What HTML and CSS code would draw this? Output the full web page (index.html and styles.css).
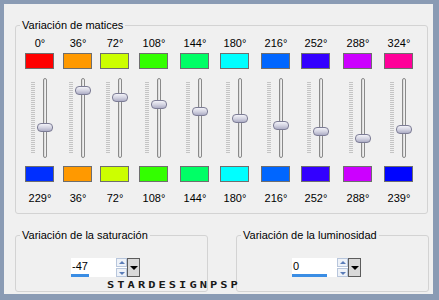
FILE: index.html
```html
<!DOCTYPE html>
<html>
<head>
<meta charset="utf-8">
<title>Variación de matices</title>
<link rel="stylesheet" href="styles.css">
</head>
<body>
<div class="frame">
  <fieldset class="group hue">
    <legend>Variación de matices</legend>
    <div class="cols">
      <div class="col">
        <div class="deg">0°</div>
        <div class="sw" style="background:hsl(0,100%,50%)"></div>
        <div class="slider"><div class="ticks"></div><div class="track"></div><div class="thumb" style="top:45px"></div></div>
        <div class="sw" style="background:hsl(229,100%,50%)"></div>
        <div class="deg">229°</div>
      </div>
      <div class="col">
        <div class="deg">36°</div>
        <div class="sw" style="background:hsl(36,100%,50%)"></div>
        <div class="slider"><div class="ticks"></div><div class="track"></div><div class="thumb" style="top:8px"></div></div>
        <div class="sw" style="background:hsl(36,100%,50%)"></div>
        <div class="deg">36°</div>
      </div>
      <div class="col">
        <div class="deg">72°</div>
        <div class="sw" style="background:hsl(72,100%,50%)"></div>
        <div class="slider"><div class="ticks"></div><div class="track"></div><div class="thumb" style="top:15px"></div></div>
        <div class="sw" style="background:hsl(72,100%,50%)"></div>
        <div class="deg">72°</div>
      </div>
      <div class="col">
        <div class="deg">108°</div>
        <div class="sw" style="background:hsl(108,100%,50%)"></div>
        <div class="slider"><div class="ticks"></div><div class="track"></div><div class="thumb" style="top:22px"></div></div>
        <div class="sw" style="background:hsl(108,100%,50%)"></div>
        <div class="deg">108°</div>
      </div>
      <div class="col">
        <div class="deg">144°</div>
        <div class="sw" style="background:hsl(144,100%,50%)"></div>
        <div class="slider"><div class="ticks"></div><div class="track"></div><div class="thumb" style="top:29px"></div></div>
        <div class="sw" style="background:hsl(144,100%,50%)"></div>
        <div class="deg">144°</div>
      </div>
      <div class="col">
        <div class="deg">180°</div>
        <div class="sw" style="background:hsl(180,100%,50%)"></div>
        <div class="slider"><div class="ticks"></div><div class="track"></div><div class="thumb" style="top:36px"></div></div>
        <div class="sw" style="background:hsl(180,100%,50%)"></div>
        <div class="deg">180°</div>
      </div>
      <div class="col">
        <div class="deg">216°</div>
        <div class="sw" style="background:hsl(216,100%,50%)"></div>
        <div class="slider"><div class="ticks"></div><div class="track"></div><div class="thumb" style="top:43px"></div></div>
        <div class="sw" style="background:hsl(216,100%,50%)"></div>
        <div class="deg">216°</div>
      </div>
      <div class="col">
        <div class="deg">252°</div>
        <div class="sw" style="background:hsl(252,100%,50%)"></div>
        <div class="slider"><div class="ticks"></div><div class="track"></div><div class="thumb" style="top:49px"></div></div>
        <div class="sw" style="background:hsl(252,100%,50%)"></div>
        <div class="deg">252°</div>
      </div>
      <div class="col">
        <div class="deg">288°</div>
        <div class="sw" style="background:hsl(288,100%,50%)"></div>
        <div class="slider"><div class="ticks"></div><div class="track"></div><div class="thumb" style="top:56px"></div></div>
        <div class="sw" style="background:hsl(288,100%,50%)"></div>
        <div class="deg">288°</div>
      </div>
      <div class="col">
        <div class="deg">324°</div>
        <div class="sw" style="background:hsl(324,100%,50%)"></div>
        <div class="slider"><div class="ticks"></div><div class="track"></div><div class="thumb" style="top:47px"></div></div>
        <div class="sw" style="background:hsl(239,100%,50%)"></div>
        <div class="deg">239°</div>
      </div>
    </div>
  </fieldset>

  <div class="bottom">
    <fieldset class="group small">
      <legend>Variación de la saturación</legend>
      <div class="spin">
        <div class="field">-47<div class="bar" style="width:18px"></div></div>
        <div class="arrows"><div class="arr up"></div><div class="arr down"></div></div>
        <div class="drop"></div>
      </div>
    </fieldset>
    <fieldset class="group small">
      <legend>Variación de la luminosidad</legend>
      <div class="spin">
        <div class="field">0<div class="bar" style="width:35px"></div></div>
        <div class="arrows"><div class="arr up"></div><div class="arr down"></div></div>
        <div class="drop"></div>
      </div>
    </fieldset>
  </div>
  <div class="mark">STARDESIGNPSP</div>
</div>
</body>
</html>
```
FILE: styles.css
```css
html, body {
  margin: 0;
  padding: 0;
  background: #8a9bb4;
}
body {
  width: 439px;
  height: 300px;
  overflow: hidden;
  font-family: "Liberation Sans", Arial, sans-serif;
  font-size: 11px;
  color: #000;
}
.frame {
  position: relative;
  margin: 4px 0 0 4px;
  width: 429px;
  height: 290px;
  box-sizing: border-box;
  background: #f0f0f0;
  padding: 14px 0 0 11px;
}
.group {
  margin: 0;
  padding: 0;
  min-width: 0;
  border: 1px solid #d3d3d3;
  border-radius: 3px;
  box-sizing: border-box;
}
.group legend {
  margin-left: 4px;
  padding: 0 2px;
  line-height: 14px;
  font-size: 11px;
  white-space: nowrap;
}
.hue {
  width: 413px;
  padding: 0 0 8px 0;
}
.cols {
  margin-left: 9px;
  display: grid;
  grid-template-columns: 38px 37px 39px 41px 40px 41px 40px 42px 41px 30px;
}
.col {
  display: flex;
  flex-direction: column;
  align-items: flex-start;
}
.deg {
  width: 30px;
  text-align: center;
  line-height: 14px;
  margin-top: 4px;
}
.col .deg:last-child {
  margin-top: 9px;
}
.sw {
  width: 29px;
  height: 16px;
  box-sizing: border-box;
  border: 1px solid #6e6e6e;
  margin-top: 3px;
}
.slider + .sw {
  margin-top: 8px;
}
.slider {
  position: relative;
  margin-top: 9px;
  width: 29px;
  height: 80px;
  display: flex;
  align-items: flex-start;
  padding-left: 6px;
  box-sizing: border-box;
}
.ticks {
  width: 4px;
  height: 71px;
  margin-top: 4px;
  background: repeating-linear-gradient(to bottom, #c4c4c4 0 1px, transparent 1px 2px);
}
.track {
  margin-left: 8px;
  width: 4px;
  height: 80px;
  box-sizing: border-box;
  border: 1px solid #8a8a8a;
  border-radius: 2px;
  background: linear-gradient(to right, #d6d6d6, #f8f8f8);
}
.thumb {
  position: absolute;
  left: 12px;
  width: 16px;
  height: 9px;
  box-sizing: border-box;
  border: 1px solid #7c7c95;
  border-radius: 4px;
  background: linear-gradient(to bottom, #f2f2f8 0%, #d4d4e2 50%, #aeaec6 100%);
}
.bottom {
  display: flex;
  gap: 28px;
  margin-top: 14px;
}
.small {
  width: 193px;
  height: 64px;
  padding: 0;
}
.spin {
  display: flex;
  height: 19px;
  margin: 16px 0 0 55px;
}
.field {
  position: relative;
  width: 45px;
  height: 19px;
  box-sizing: border-box;
  background: #fff;
  padding-left: 1px;
  line-height: 16px;
}
.bar {
  position: absolute;
  left: 0;
  bottom: 0;
  height: 3px;
  background: #3a8de4;
}
.arrows {
  width: 11px;
  display: flex;
  flex-direction: column;
  gap: 1px;
  background: #fff;
}
.arr {
  flex: 1;
  border: 1px solid #b8c6dc;
  background: #eef2f8;
  position: relative;
}
.arr::after {
  content: "";
  position: absolute;
  left: 50%;
  top: 50%;
  margin-left: -3px;
  border-left: 3px solid transparent;
  border-right: 3px solid transparent;
}
.up::after {
  margin-top: -2px;
  border-bottom: 3px solid #5a7cb8;
}
.down::after {
  margin-top: -1px;
  border-top: 3px solid #5a7cb8;
}
.drop {
  position: relative;
  width: 13px;
  box-sizing: border-box;
  border: 1px solid #5c5c5c;
  background: #d9d9d9;
}
.drop::after {
  content: "";
  position: absolute;
  left: 50%;
  top: 50%;
  margin-left: -4px;
  margin-top: -2px;
  border-left: 4px solid transparent;
  border-right: 4px solid transparent;
  border-top: 4px solid #000;
}
.mark {
  position: absolute;
  left: 103px;
  top: 278px;
  font-family: "DejaVu Sans Mono", monospace;
  font-size: 8px;
  line-height: 8px;
  font-weight: bold;
  letter-spacing: 2.05px;
  transform: scaleX(1.5);
  transform-origin: left top;
  color: #1a1a1a;
}
```
